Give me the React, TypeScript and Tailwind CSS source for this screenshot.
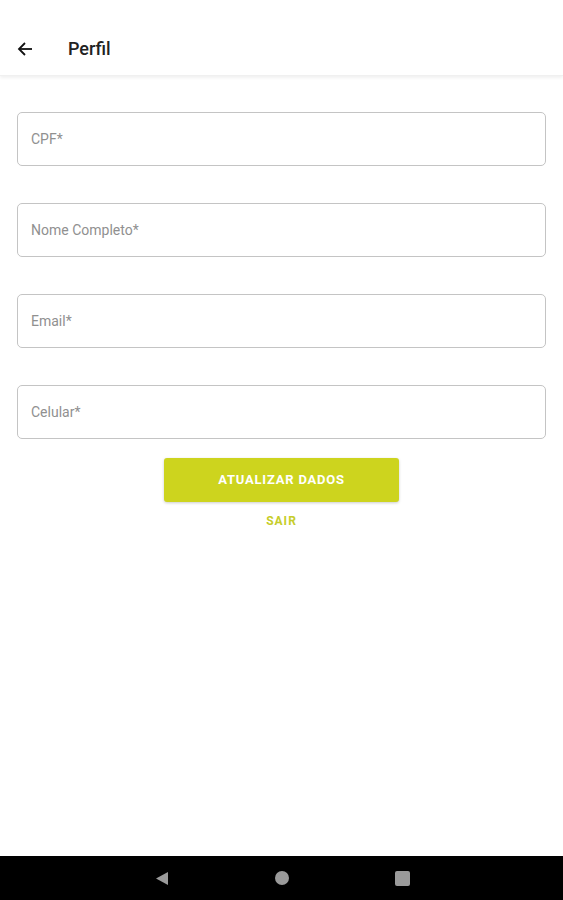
import React from "react";

const fields = ["CPF*", "Nome Completo*", "Email*", "Celular*"];

export default function App() {
  return (
    <div className="w-[563px] h-[900px] bg-white flex flex-col" style={{ fontFamily: "Roboto, 'Noto Sans', sans-serif" }}>
      <div className="h-[76px] pt-[22px] flex items-center shadow-[0_2px_3px_rgba(0,0,0,0.06)] border-b border-[#f0f0f0]">
        <div className="w-[50px] flex justify-center">
          <svg width="16" height="16" viewBox="0 0 16 16" fill="none" stroke="#111" strokeWidth="1.8">
            <path d="M15 8H2" />
            <path d="M8 2L2 8l6 6" />
          </svg>
        </div>
        <div className="ml-[18px] text-[18px] font-medium text-[#222]">Perfil</div>
      </div>
      <div className="flex flex-col px-[17px] pt-[36px] gap-[37px]">
        {fields.map((f) => (
          <div key={f} className="h-[54px] border border-[#c4c4c4] rounded-[5px] flex items-center px-[13px]">
            <span className="text-[14px] text-[#909090]">{f}</span>
          </div>
        ))}
      </div>
      <div className="flex flex-col items-center mt-[19px]">
        <button className="w-[235px] h-[44px] bg-[#cdd41e] rounded-[3px] shadow-[0_1px_3px_rgba(0,0,0,0.2)] text-white text-[13px] font-bold tracking-[0.8px]">
          ATUALIZAR DADOS
        </button>
        <div className="mt-[10px] text-[#c6cd2a] text-[12px] font-bold tracking-[1px]">SAIR</div>
      </div>
      <div className="flex-1" />
      <div className="h-[44px] bg-black flex items-center">
        <div className="flex items-center justify-between w-[256px] mx-auto pl-[1px]">
          <svg width="14" height="15" viewBox="0 0 14 15"><path d="M13 1L1 7.5L13 14Z" fill="#9a9a9a" /></svg>
          <div className="w-[14px] h-[14px] rounded-full bg-[#9a9a9a]" />
          <div className="w-[15px] h-[15px] rounded-[2px] bg-[#9a9a9a]" />
        </div>
      </div>
    </div>
  );
}
